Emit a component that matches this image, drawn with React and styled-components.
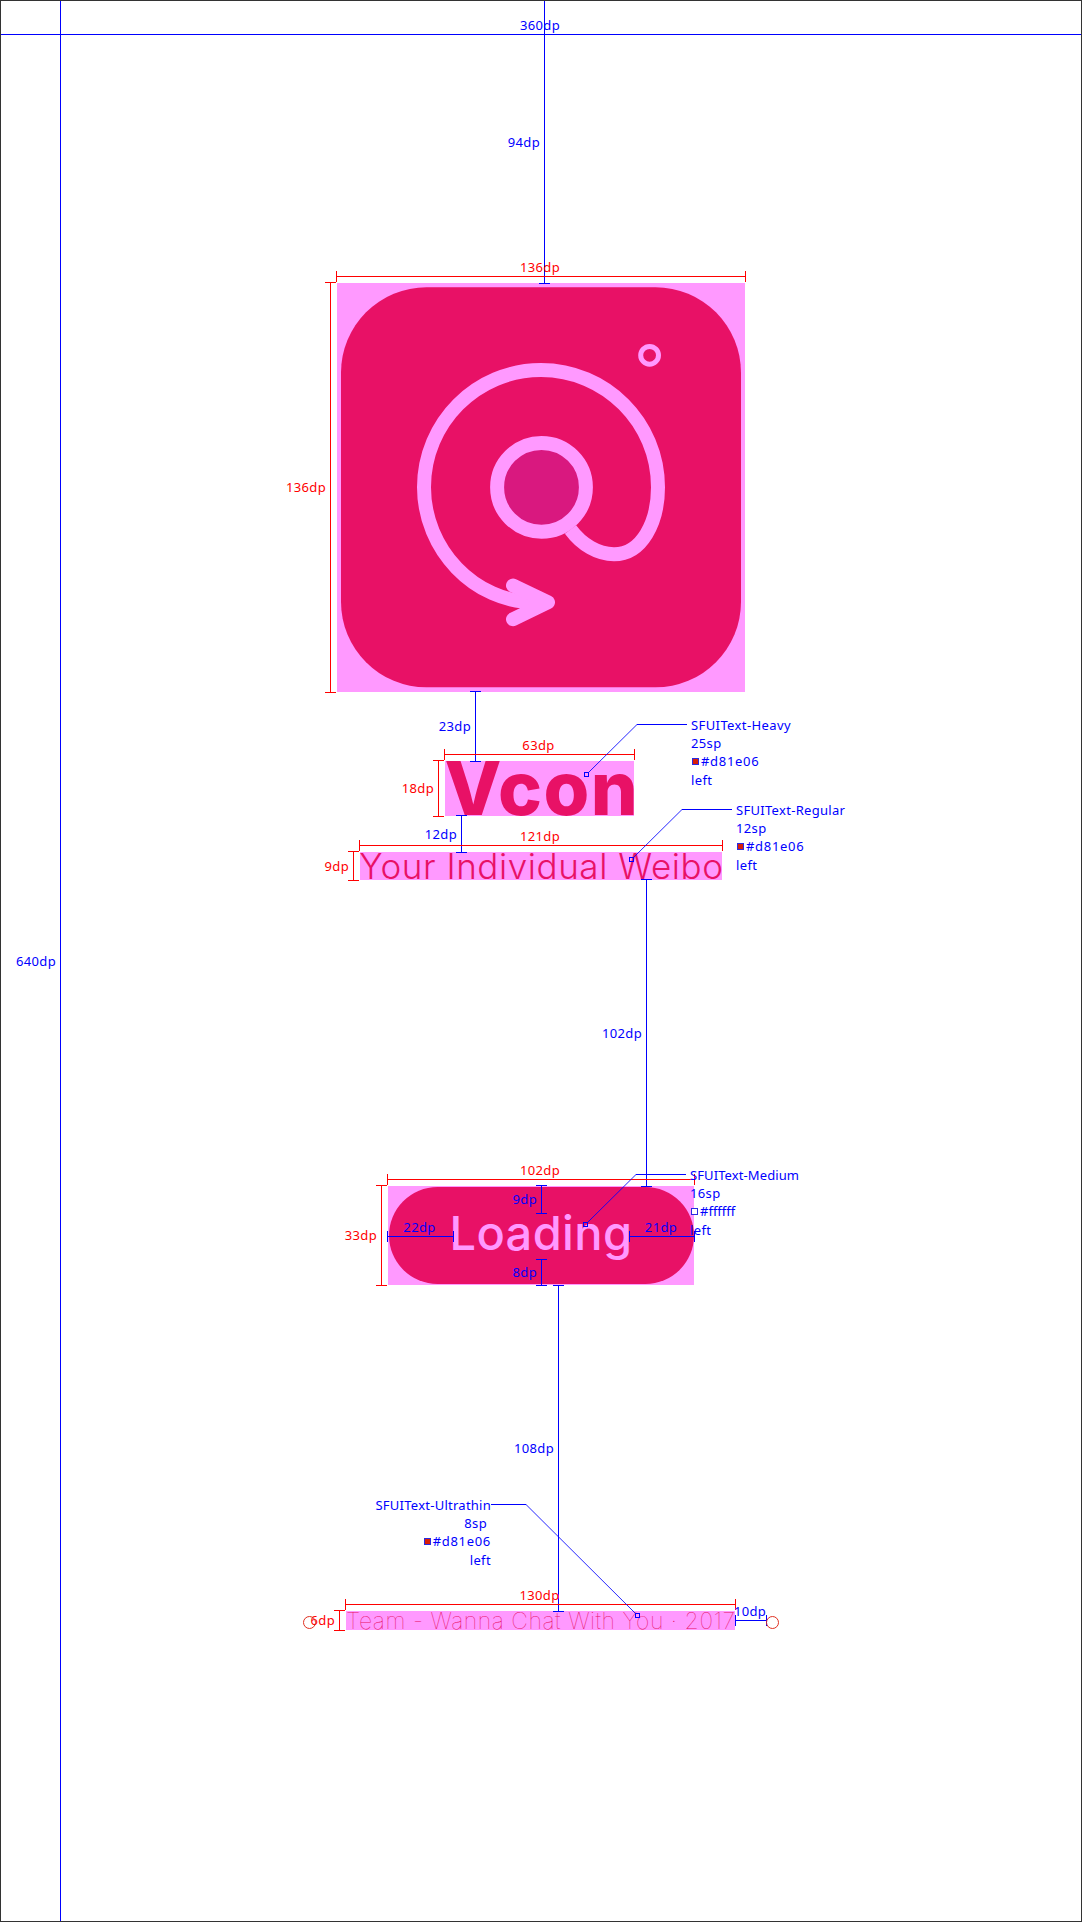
import React from "react";
import styled, { createGlobalStyle, css } from "styled-components";

const BLUE = "#0000ff";
const RED = "#ff0000";
const PINK = "#ff99ff";
const BRAND = "#e81166";

const GlobalStyle = createGlobalStyle`
  body { margin: 0; background: #fff; }
  * { box-sizing: border-box; }
`;

const Artboard = styled.main`
  position: relative;
  width: 1082px;
  height: 1922px;
  border: 1px solid #333;
  background: #fff;
  overflow: hidden;
  display: flex;
  flex-direction: column;
  align-items: center;
  padding-top: 282px;
  font-family: Inter, "Liberation Sans", sans-serif;
  color: ${BRAND};
`;

const Tinted = styled.div`
  background: ${PINK};
  display: flex;
  white-space: nowrap;
  flex: none;
`;

const AppIcon = styled(Tinted)`
  width: 408px;
  height: 409px;
  svg { display: block; }
`;

const Title = styled(Tinted).attrs({ as: "h1" })`
  width: 189px;
  height: 55px;
  margin: 69px 3px 0 0;
  font-size: 74px;
  font-weight: 800;
  line-height: 54px;
  text-indent: -0.5px;
  letter-spacing: ${(p) => p.$tracking}px;
`;

const Tagline = styled(Tinted).attrs({ as: "p" })`
  width: 362px;
  height: 28px;
  margin: 36px 0 0;
  font-size: 35px;
  font-weight: 340;
  line-height: 29px;
  text-indent: -0.8px;
  letter-spacing: ${(p) => p.$tracking}px;
`;

const ButtonArea = styled(Tinted)`
  width: 306px;
  height: 99px;
  margin-top: 306px;
  padding: 1px 0.5px;
`;

const LoadingButton = styled.button`
  flex: 1;
  border: 0;
  border-radius: 49px;
  background: ${BRAND};
  color: ${PINK};
  font: 500 47px/92px Inter, sans-serif;
  letter-spacing: ${(p) => p.$tracking}px;
  padding: 0 0 5px 61px;
  text-align: left;
`;

const Footer = styled(Tinted).attrs({ as: "footer" })`
  width: 389px;
  height: 19px;
  margin-top: 326px;
  margin-right: 1px;
  font-size: 23px;
  font-weight: 140;
  line-height: 20px;
  letter-spacing: ${(p) => p.$tracking}px;
`;

/* Redline layer, drawn over the screen */
const Redlines = styled.div`
  position: absolute;
  inset: -1px;
  font: 13px/18px "Noto Sans", "DejaVu Sans", sans-serif;
  letter-spacing: 0.35px;
  color: ${BLUE};
  white-space: nowrap;
`;

const tick = css`
  content: "";
  position: absolute;
  background: currentColor;
`;

const HorizontalRule = styled.div`
  position: absolute;
  left: ${(p) => p.$from}px;
  top: ${(p) => p.$at}px;
  width: ${(p) => p.$to - p.$from + 1}px;
  height: 1px;
  color: ${(p) => p.$color};
  background: currentColor;
  display: flex;
  justify-content: center;
  align-items: flex-end;
  &::before { ${tick} left: 0; top: -5px; width: 1px; height: 11px; }
  &::after { ${tick} right: 0; top: -5px; width: 1px; height: 11px; }
`;

const VerticalRule = styled.div`
  position: absolute;
  top: ${(p) => p.$from}px;
  left: ${(p) => p.$at}px;
  height: ${(p) => p.$to - p.$from + 1}px;
  width: 1px;
  color: ${(p) => p.$color};
  background: currentColor;
  display: flex;
  justify-content: flex-end;
  align-items: center;
  &::before { ${tick} top: 0; left: -5px; height: 1px; width: 11px; }
  &::after { ${tick} bottom: 0; left: -5px; height: 1px; width: 11px; }
`;

const AboveLabel = styled.span`
  flex: none;
  margin: 0 2px 1px 0;
`;

const SideLabel = styled.span`
  flex: none;
  margin: 0 5px 1px 0;
`;

function Measure({ dir, color = BLUE, children, ...rest }) {
  const Rule = dir === "h" ? HorizontalRule : VerticalRule;
  const Label = dir === "h" ? AboveLabel : SideLabel;
  return (
    <Rule $at={rest.at} $from={rest.from} $to={rest.to} $color={color}>
      <Label>{children}</Label>
    </Rule>
  );
}

const Leader = styled.svg`
  position: absolute;
  left: 0;
  top: 0;
  width: 1082px;
  height: 1922px;
  fill: none;
  stroke: ${BLUE};
  stroke-width: 1;
`;

const Note = styled.div`
  position: absolute;
  top: ${(p) => p.$y}px;
  ${(p) => (p.$alignRight ? `right: ${1082 - p.$x}px;` : `left: ${p.$x}px;`)}
  display: flex;
  flex-direction: column;
  align-items: ${(p) => (p.$alignRight ? "flex-end" : "flex-start")};
`;

const NoteFont = styled.span`
  letter-spacing: ${(p) => p.$tracking}px;
`;

const NoteSize = styled.span`
  margin-right: 4px;
`;

const NoteColor = styled.span`
  display: flex;
  align-items: center;
  gap: 2px;
  height: 18px;
  letter-spacing: ${(p) => p.$tracking}px;
`;

const Swatch = styled.i`
  width: 7px;
  height: 7px;
  margin-top: 1px;
  margin-left: 1px;
  border: 1px solid #2a2ae0;
  background: ${(p) => p.$fill};
`;

const NoteAlign = styled.span`
  margin-top: 1px;
`;

const HandleRing = styled.i`
  position: absolute;
  left: ${(p) => p.$x}px;
  top: 1616px;
  width: 13px;
  height: 13px;
  border: 1px solid #e03020;
  border-radius: 50%;
`;

function Callout({ marker, bend, end, text, font, tracking, size, color, colorTracking = 0.7, alignRight }) {
  return (
    <>
      <Leader>
        <path
          strokeOpacity="0.85"
          d={`M${marker[0] + (marker[0] < bend[0] ? 3 : -2)} ${marker[1] - 2}L${bend[0]} ${bend[1] + 0.5}`}
        />
        <path d={`M${bend[0]} ${bend[1] + 0.5}H${end}`} />
        <rect x={marker[0] - 1.5} y={marker[1] - 1.5} width="4" height="4" />
      </Leader>
      <Note $x={text} $y={bend[1] - 8} $alignRight={alignRight}>
        <NoteFont $tracking={tracking}>{font}</NoteFont>
        <NoteSize>{size}</NoteSize>
        <NoteColor $tracking={colorTracking}>
          <Swatch $fill={color} />
          {color}
        </NoteColor>
        <NoteAlign>left</NoteAlign>
      </Note>
    </>
  );
}

function LogoMark() {
  return (
    <svg width="408" height="409" viewBox="337 283 408 409" fill="none">
      <rect x="341" y="287.3" width="400" height="400" rx="85.5" fill={BRAND} />
      <circle cx="541.5" cy="487.3" r="44.4" fill="#d9187f" stroke={PINK} strokeWidth="14" />
      <circle cx="649.6" cy="355.3" r="8.9" stroke={PINK} strokeWidth="5" />
      <g stroke={PINK} strokeWidth="14" strokeLinejoin="round">
        <path d="M570.5 529.5C582 545 598 554.2 614 554.2C642 554.2 658 522 658 487.3C658 422.5 605.6 370 541 370C476.4 370 424 422.5 424 487.3C424 549 474 602.5 536 602.5" />
        <path strokeLinecap="round" d="M513 585.5L548 602.3L513 619.2" />
      </g>
    </svg>
  );
}

export default function App() {
  return (
    <>
      <GlobalStyle />
      <Artboard>
        <AppIcon>
          <LogoMark />
        </AppIcon>
        <Title $tracking={1.4}>Vcon</Title>
        <Tagline $tracking={0.57}>Your Individual Weibo</Tagline>
        <ButtonArea>
          <LoadingButton $tracking={0.35}>Loading</LoadingButton>
        </ButtonArea>
        <Footer $tracking={0.53}>Team - Wanna Chat With You · 2017</Footer>

        <Redlines>
          <Measure dir="h" at={34} from={0} to={1081}>360dp</Measure>
          <Measure dir="v" at={60} from={0} to={1921}>640dp</Measure>
          <Measure dir="v" at={544} from={0} to={283}>94dp</Measure>
          <Measure dir="h" color={RED} at={276} from={336} to={745}>136dp</Measure>
          <Measure dir="v" color={RED} at={330} from={282} to={692}>136dp</Measure>
          <Measure dir="v" at={475} from={691} to={761}>23dp</Measure>
          <Measure dir="h" color={RED} at={754} from={444} to={634}>63dp</Measure>
          <Measure dir="v" color={RED} at={438} from={760} to={816}>18dp</Measure>
          <Measure dir="v" at={461} from={815} to={852}>12dp</Measure>
          <Measure dir="h" color={RED} at={845} from={359} to={722}>121dp</Measure>
          <Measure dir="v" color={RED} at={353} from={851} to={880}>9dp</Measure>
          <Measure dir="v" at={646} from={879} to={1186}>102dp</Measure>
          <Measure dir="h" color={RED} at={1179} from={387} to={694}>102dp</Measure>
          <Measure dir="v" color={RED} at={381} from={1185} to={1285}>33dp</Measure>
          <Measure dir="v" at={541} from={1185} to={1213}>9dp</Measure>
          <Measure dir="v" at={541} from={1259} to={1285}>8dp</Measure>
          <Measure dir="h" at={1236} from={387} to={453}>22dp</Measure>
          <Measure dir="h" at={1236} from={629} to={694}>21dp</Measure>
          <Measure dir="v" at={558} from={1285} to={1611}>108dp</Measure>
          <Measure dir="h" color={RED} at={1604} from={345} to={735}>130dp</Measure>
          <Measure dir="v" color={RED} at={339} from={1610} to={1630}>6dp</Measure>
          <Measure dir="h" at={1620} from={735} to={766}>10dp</Measure>
          <HandleRing $x={303} />
          <HandleRing $x={766} />

          <Callout marker={[586, 774]} bend={[637, 724]} end={687} text={691}
            font="SFUIText-Heavy" tracking={0.4} size="25sp" color="#d81e06" />
          <Callout marker={[631, 859]} bend={[682, 809]} end={732} text={736}
            font="SFUIText-Regular" tracking={0.3} size="12sp" color="#d81e06" />
          <Callout marker={[585, 1224]} bend={[636, 1174]} end={686} text={690}
            font="SFUIText-Medium" tracking={0.1} size="16sp" color="#ffffff" colorTracking={0} />
          <Callout marker={[637, 1615]} bend={[526, 1504]} end={491} text={491} alignRight
            font="SFUIText-Ultrathin" tracking={0.25} size="8sp" color="#d81e06" />
        </Redlines>
      </Artboard>
    </>
  );
}
